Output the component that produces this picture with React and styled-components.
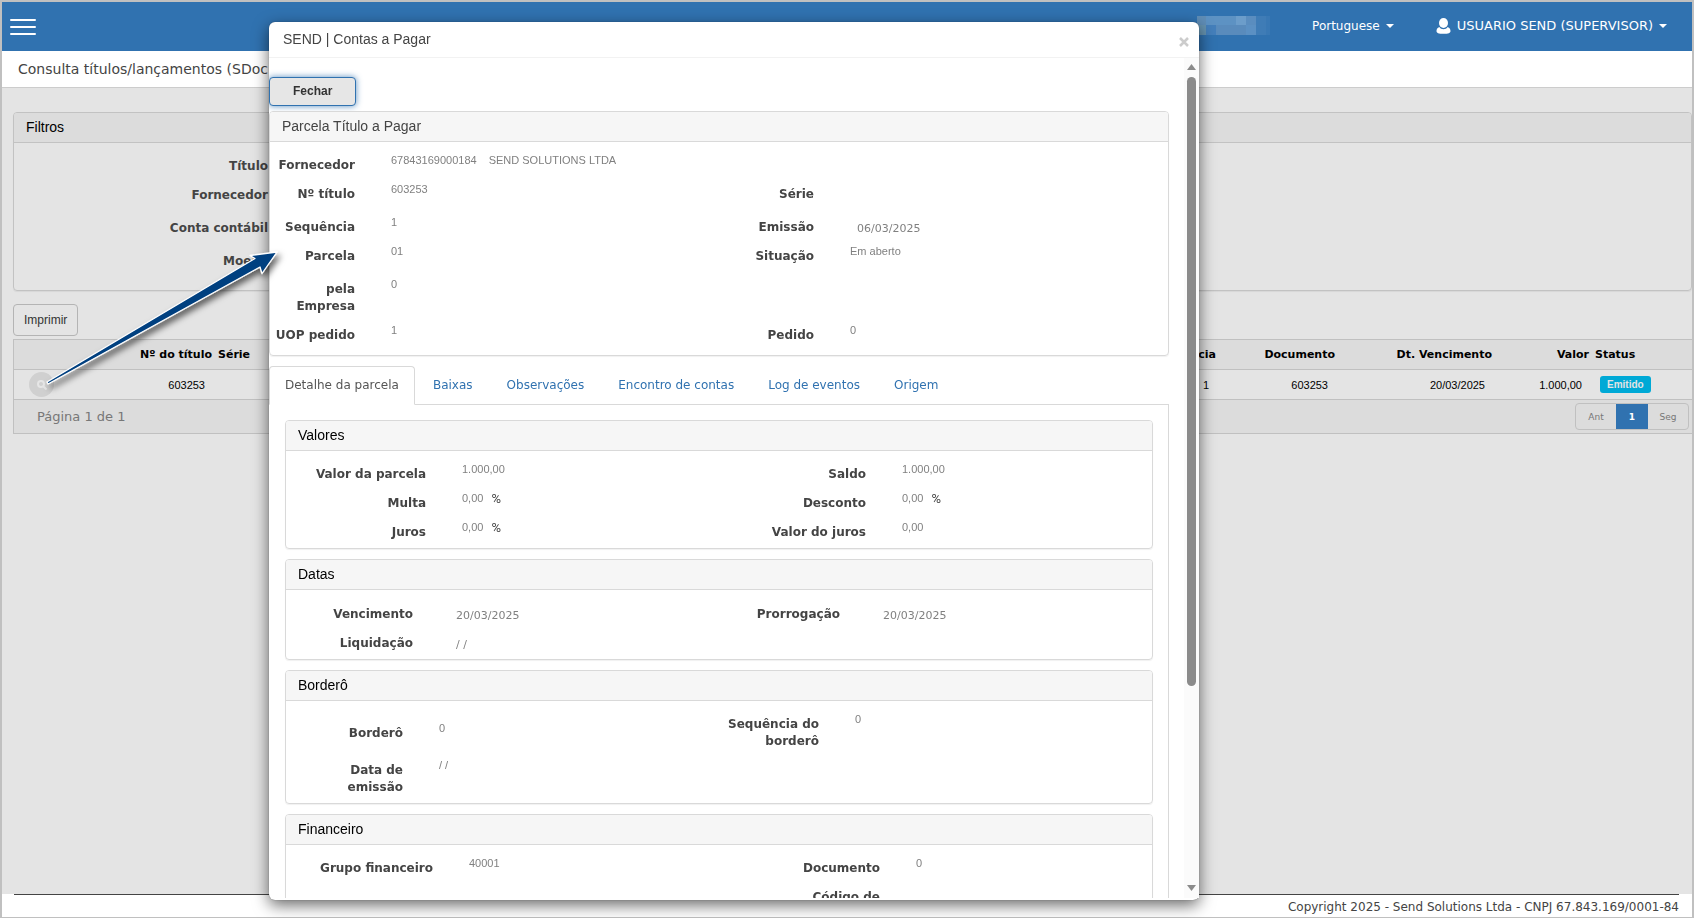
import React from "react";
import styled, { createGlobalStyle } from "styled-components";

const verdana = `Verdana, "DejaVu Sans", sans-serif`;
const arial = `Arial, "Liberation Sans", sans-serif`;

const GlobalStyle = createGlobalStyle`
  * {
    box-sizing: border-box;
  }
  body {
    margin: 0;
    font-family: ${verdana};
    font-size: 12px;
    color: #444;
  }
  h1, h2, h3, p, dl, dd {
    margin: 0;
    font-weight: normal;
  }
`;

/* ---------- page ---------- */

const Page = styled.div`
  height: 100vh;
  display: flex;
  flex-direction: column;
  overflow: hidden;
  border: 2px solid #c0c0c0;
  border-bottom-width: 1px;
  background: #e4e4e4;
`;

const Topbar = styled.header`
  flex: 0 0 49px;
  display: flex;
  align-items: center;
  padding: 0 25px 0 8px;
  background: #3072b0;
`;

const PlainButton = styled.button`
  display: flex;
  align-items: center;
  gap: 6px;
  padding: 0;
  border: 0;
  background: none;
  color: inherit;
  font: inherit;
`;

const UserButton = styled(PlainButton)`
  font-size: 13px;
`;

const UserNav = styled.nav`
  display: flex;
  align-items: center;
  gap: 42px;
  margin-left: auto;
  padding-bottom: 2px;
  color: #fff;
`;

const Caret = styled.span`
  border: 4px solid transparent;
  border-top-color: currentColor;
  border-bottom: 0;
`;

const TitleBar = styled.div`
  flex: 0 0 37px;
  padding: 0 16px;
  border-bottom: 1px solid #ccc;
  background: #fff;
  line-height: 36px;
`;

const PageTitle = styled.h1`
  font-size: 14px;
`;

const Content = styled.main`
  flex: 1;
  min-height: 0;
  padding: 24px 0 0 11px;
`;

const Footer = styled.footer`
  flex: 0 0 23px;
  padding: 0 13px 0 12px;
  background: #fff;
  text-align: right;
  line-height: 20px;

  p {
    padding-top: 2px;
    border-top: 1px solid #444;
  }
`;

/* ---------- panels and fields ---------- */

const PanelBox = styled.section`
  border: 1px solid ${({ $dim }) => ($dim ? "#c2c2c2" : "#d9d9d9")};
  border-radius: 4px;
  box-shadow: 0 1px 1px rgba(0, 0, 0, 0.06);
`;

const PanelTitle = styled.h3`
  padding: 0 12px;
  border-bottom: 1px solid ${({ $dim }) => ($dim ? "#c2c2c2" : "#d9d9d9")};
  border-radius: 3px 3px 0 0;
  background: ${({ $dim }) => ($dim ? "#dcdcdc" : "#f6f6f6")};
  color: ${({ $soft }) => ($soft ? "#444" : "#000")};
  font-family: ${arial};
  font-size: 14px;
  line-height: 29px;
`;

const PanelBody = styled.dl`
  padding: ${({ $pad }) => $pad || "10px 0 0"};
`;

const Row = styled.div`
  display: grid;
  grid-template-columns: 1fr 1fr;
  align-items: center;
  margin-top: ${({ $spaced }) => ($spaced ? "4px" : "0")};
`;

const FieldBox = styled.div`
  display: flex;
  align-items: flex-start;
`;

const Label = styled.dt`
  flex: 0 0 ${({ $width }) => $width}px;
  padding: 5px 0 7px;
  font-weight: bold;
  line-height: 17px;
  text-align: right;
  white-space: pre;
`;

const Value = styled.dd`
  display: flex;
  gap: ${({ $wide }) => ($wide ? "12px" : "8px")};
  padding: ${({ $date }) => ($date ? "6px 0 0 43px" : "0 0 0 36px")};
  color: #808080;
  font-family: ${({ $date }) => ($date ? verdana : arial)};
  font-size: 11px;
  line-height: 17px;
`;

const Unit = styled.span`
  color: #444;
  font-family: Roboto, sans-serif;
  font-size: 13px;
`;

/* ---------- results table ---------- */

const PrintButton = styled.button`
  display: block;
  height: 32px;
  margin: 13px 0 3px;
  padding: 0 10px;
  border: 1px solid #b4b4b4;
  border-radius: 4px;
  background: transparent;
  color: #333;
  font-family: ${arial};
  font-size: 12px;
`;

const Table = styled.table`
  width: 100%;
  table-layout: fixed;
  border-collapse: separate;
  border-spacing: 0;
  border: solid #c0c0c0;
  border-width: 1px 0 0 1px;
  color: #000;
  font-size: 11px;

  th {
    height: 30px;
    padding: 0 0 0 6px;
    border-bottom: 1px solid #c0c0c0;
    background: #dcdcdc;
    text-align: right;
    white-space: nowrap;
  }
  td {
    height: 29px;
    padding: 0 7px 0 6px;
    font-family: ${arial};
    text-align: right;
  }
  th.left,
  td.left {
    text-align: left;
  }
`;

const RoundButton = styled.button`
  display: flex;
  align-items: center;
  justify-content: center;
  width: 25px;
  height: 25px;
  margin-left: 9px;
  padding: 0;
  border: 0;
  border-radius: 50%;
  background: #d0d0d0;
`;

const Badge = styled.span`
  display: inline-block;
  margin-left: 5px;
  padding: 0 7px;
  border-radius: 3px;
  background: #00a9d6;
  color: #e4e4e4;
  font-size: 10px;
  font-weight: bold;
  line-height: 17px;
`;

const TableFooter = styled.div`
  display: flex;
  align-items: center;
  justify-content: space-between;
  height: 35px;
  padding: 0 3px 0 23px;
  border: 1px solid #c0c0c0;
  border-right: 0;
  background: #dcdcdc;
  color: #777;
  font-size: 13px;
`;

const Pager = styled.nav`
  display: flex;
  border: 1px solid #c0c0c0;
  border-radius: 4px;
`;

const PageButton = styled.button`
  width: ${({ $active }) => ($active ? "32px" : "40px")};
  height: 25px;
  padding: 0;
  border: 0;
  background: ${({ $active }) => ($active ? "#3072b0" : "transparent")};
  color: ${({ $active }) => ($active ? "#fff" : "#777")};
  font-family: ${verdana};
  font-size: 9px;
  font-weight: ${({ $active }) => ($active ? "bold" : "normal")};
`;

/* ---------- modal ---------- */

const Overlay = styled.div`
  position: fixed;
  inset: 0;
  display: flex;
  padding: 22px 24px 18px 269px;
`;

const Dialog = styled.div`
  flex: 1;
  max-width: 930px;
  display: flex;
  flex-direction: column;
  padding-bottom: 2px;
  border-radius: 6px;
  background: #fff;
  box-shadow: 0 0 1px rgba(0, 0, 0, 0.5), 0 5px 16px rgba(0, 0, 0, 0.6);
`;

const DialogHeader = styled.div`
  flex: 0 0 36px;
  display: flex;
  align-items: center;
  justify-content: space-between;
  padding: 0 10px 0 14px;
  border-bottom: 1px solid #f2f2f2;
`;

const DialogTitle = styled.h2`
  padding-bottom: 2px;
  font-family: ${arial};
  font-size: 14px;
`;

const CloseButton = styled(PlainButton)`
  padding-top: 5px;
`;

const DialogMain = styled.div`
  flex: 1;
  min-height: 0;
  display: flex;
`;

const Scroller = styled.div`
  flex: 1;
  overflow-y: auto;
  padding: 19px 15px 0 0;
  scrollbar-width: none;
`;

const ScrollRail = styled.div`
  flex: 0 0 15px;
  display: flex;
  flex-direction: column;
  align-items: center;
  padding: 6px 0 7px;
  background: #fbfbfb;
`;

const ScrollTrack = styled.div`
  flex: 1;
  width: 9px;
  padding: 7px 0;

  &::before {
    content: "";
    display: block;
    height: 76%;
    border-radius: 5px;
    background: #8b8b8b;
  }
`;

const FecharButton = styled.button`
  display: block;
  height: 29px;
  margin-bottom: 5px;
  padding: 0 23px 2px;
  border: 1px solid #3072b0;
  border-radius: 4px;
  background: #e6e6e6;
  box-shadow: 0 0 6px rgba(48, 114, 176, 0.8);
  color: #333;
  font-family: ${arial};
  font-size: 12px;
  font-weight: bold;
`;

const Tabs = styled.nav`
  display: flex;
  gap: 2px;
  margin-top: 10px;
  border-bottom: 1px solid #d9d9d9;
`;

const Tab = styled.a`
  margin-bottom: -1px;
  padding: 0 15px;
  border: 1px solid ${({ $active }) => ($active ? "#d9d9d9" : "transparent")};
  border-bottom-color: ${({ $active }) => ($active ? "#fff" : "transparent")};
  border-radius: 4px 4px 0 0;
  color: ${({ $active }) => ($active ? "#555" : "#3072b0")};
  line-height: 37px;
  text-decoration: none;
`;

const TabPanel = styled.div`
  display: flex;
  flex-direction: column;
  gap: 10px;
  padding: 15px 15px 20px 16px;
  border-right: 1px solid #d9d9d9;
`;

/* pointer from the search button to the dialog */
const Pointer = styled.svg`
  position: fixed;
  left: 40px;
  top: 240px;
  pointer-events: none;
`;

const Field = ({ label, width, value, extra, date, unit }) => (
  <FieldBox>
    <Label $width={width}>{label}</Label>
    <Value $date={date} $wide={!!extra}>
      {value}
      {extra && <span>{extra}</span>}
      {unit && <Unit>{unit}</Unit>}
    </Value>
  </FieldBox>
);

const Panel = ({ title, pad, soft, dim, left, right, rows }) => (
  <PanelBox $dim={dim}>
    <PanelTitle $soft={soft} $dim={dim}>{title}</PanelTitle>
    <PanelBody $pad={pad}>
      {rows.map(([a, b, spaced]) => (
        <Row key={a.label} $spaced={spaced}>
          <Field width={left} {...a} />
          {b && <Field width={right} {...b} />}
        </Row>
      ))}
    </PanelBody>
  </PanelBox>
);

const filtros = [
  [{ label: "Título" }],
  [{ label: "Fornecedor" }],
  [{ label: "Conta contábil" }, null, true],
  [{ label: "Moeda" }, null, true],
];

const parcela = [
  [{ label: "Fornecedor", value: "67843169000184", extra: "SEND SOLUTIONS LTDA" }],
  [{ label: "Nº título", value: "603253" }, { label: "Série" }],
  [{ label: "Sequência", value: "1" }, { label: "Emissão", value: "06/03/2025", date: true }, true],
  [{ label: "Parcela", value: "01" }, { label: "Situação", value: "Em aberto" }],
  [{ label: "pela\nEmpresa", value: "0" }, null, true],
  [{ label: "UOP pedido", value: "1" }, { label: "Pedido", value: "0" }],
];

const valores = [
  [{ label: "Valor da parcela", value: "1.000,00" }, { label: "Saldo", value: "1.000,00" }],
  [{ label: "Multa", value: "0,00", unit: "%" }, { label: "Desconto", value: "0,00", unit: "%" }],
  [{ label: "Juros", value: "0,00", unit: "%" }, { label: "Valor do juros", value: "0,00" }],
];

const datas = [
  [
    { label: "Vencimento", value: "20/03/2025", date: true },
    { label: "Prorrogação", value: "20/03/2025", date: true },
  ],
  [{ label: "Liquidação", value: "/ /", date: true }],
];

const bordero = [
  [{ label: "Borderô", value: "0" }, { label: "Sequência do\nborderô", value: "0" }],
  [{ label: "Data de\nemissão", value: "/ /" }],
];

const financeiro = [
  [{ label: "Grupo financeiro", value: "40001" }, { label: "Documento", value: "0" }],
  [{ label: "Câmbio", value: "" }, { label: "Código de\nbarras", value: "" }],
];

const tabs = [
  "Detalhe da parcela",
  "Baixas",
  "Observações",
  "Encontro de contas",
  "Log de eventos",
  "Origem",
];

const MenuIcon = () => (
  <svg width="26" height="18" viewBox="0 0 26 18" stroke="#fff" strokeWidth="2" strokeLinecap="round">
    <path d="M1 2h24M1 9h24M1 16h24" />
  </svg>
);

const UserIcon = () => (
  <svg width="15" height="16" viewBox="0 0 15 16" fill="#fff">
    <ellipse cx="7.500" cy="5" rx="4.500" ry="5" />
    <path d="M3.300 9C1.500 9.800.5 11.200.5 13c0 2 2 2.800 7 2.800s7-.8 7-2.800c0-1.800-1-3.200-2.800-4-1 1.500-2.500 2.200-4.200 2.200S4.300 10.500 3.300 9z" />
  </svg>
);

/* masked company name */
const MaskedName = () => (
  <svg width="73" height="19" viewBox="0 0 73 19" shapeRendering="crispEdges">
    <path fill="#5f8db6" d="M0 0h9v9H0z" />
    <path fill="#5d92c3" d="M9 0h30v9H9z" />
    <path fill="#6c9dca" d="M39 0h10v9H39z" />
    <path fill="#5a8dbf" d="M49 0h10v9H49z" />
    <path fill="#3f7cb6" d="M59 0h10v19H59z" />
    <path fill="#3978b4" d="M69 0h4v19h-4z" />
    <path fill="#6592af" d="M0 9h9v10H0z" />
    <path fill="#447fbb" d="M9 9h10v10H9z" />
    <path fill="#598bbc" d="M19 9h30v10H19z" />
    <path fill="#5b90c3" d="M49 9h10v10H49z" />
  </svg>
);

const SearchIcon = () => (
  <svg width="10" height="10" viewBox="0 0 10 10" fill="none" stroke="#e6e6e6" strokeWidth="2">
    <circle cx="4" cy="4" r="3" />
    <path d="M6.500 6.500L9.500 9.500" />
  </svg>
);

const ArrowPointer = () => (
  <Pointer width="250" height="160" viewBox="40 240 250 160" aria-hidden="true">
    <defs>
      <filter id="pointerShadow" x="-10%" y="-10%" width="130%" height="130%">
        <feDropShadow dx="3" dy="4" stdDeviation="3" floodOpacity="0.6" />
      </filter>
    </defs>
    <path
      d="M47 382L255 258.500L250 255.500L277 252L262 273.500L260 267L48 384Z"
      fill="#004080"
      stroke="#fff"
      strokeWidth="1.300"
      strokeLinejoin="round"
      filter="url(#pointerShadow)"
    />
  </Pointer>
);

const ContasAPagar = () => (
  <Overlay>
    <Dialog role="dialog" aria-labelledby="dialog-title">
      <DialogHeader>
        <DialogTitle id="dialog-title">SEND | Contas a Pagar</DialogTitle>
        <CloseButton type="button" aria-label="Fechar janela">
          <svg width="10" height="10" viewBox="0 0 10 10" stroke="#ccc" strokeWidth="2.500">
            <path d="M1 1l8 8M9 1l-8 8" />
          </svg>
        </CloseButton>
      </DialogHeader>
      <DialogMain>
        <Scroller>
          <FecharButton type="button">Fechar</FecharButton>
          <Panel title="Parcela Título a Pagar" soft left={85} right={95} pad="10px 0 4px" rows={parcela} />
          <Tabs>
            {tabs.map((name, i) => (
              <Tab key={name} href="#" $active={i === 0}>{name}</Tab>
            ))}
          </Tabs>
          <TabPanel>
            <Panel title="Valores" left={140} right={147} rows={valores} />
            <Panel title="Datas" left={127} right={121} pad="11px 0 0" rows={datas} />
            <Panel title="Borderô" left={117} right={100} rows={bordero} />
            <Panel title="Financeiro" left={147} right={161} rows={financeiro} />
          </TabPanel>
        </Scroller>
        <ScrollRail>
          <svg width="9" height="6" viewBox="0 0 9 6" fill="#8b8b8b">
            <path d="M4.500 0L9 6H0z" />
          </svg>
          <ScrollTrack />
          <svg width="9" height="6" viewBox="0 0 9 6" fill="#8b8b8b">
            <path d="M0 0h9L4.500 6z" />
          </svg>
        </ScrollRail>
      </DialogMain>
    </Dialog>
  </Overlay>
);

const App = () => (
  <>
    <GlobalStyle />
    <Page>
      <Topbar>
        <PlainButton type="button" aria-label="Menu">
          <MenuIcon />
        </PlainButton>
        <UserNav>
          <MaskedName />
          <PlainButton type="button">
            Portuguese
            <Caret />
          </PlainButton>
          <UserButton type="button">
            <UserIcon />
            USUARIO SEND (SUPERVISOR)
            <Caret />
          </UserButton>
        </UserNav>
      </Topbar>
      <TitleBar>
        <PageTitle>Consulta títulos/lançamentos (SDoc</PageTitle>
      </TitleBar>
      <Content>
        <Panel title="Filtros" dim left={254} pad="10px 0 13px" rows={filtros} />
        <PrintButton type="button">Imprimir</PrintButton>
        <Table>
          <colgroup>
            <col style={{ width: 39 }} />
            <col style={{ width: 38 }} />
            <col style={{ width: 121 }} />
            <col style={{ width: 100 }} />
            <col />
            <col style={{ width: 119 }} />
            <col style={{ width: 157 }} />
            <col style={{ width: 97 }} />
            <col style={{ width: 103 }} />
          </colgroup>
          <thead>
            <tr>
              <th colSpan="2" />
              <th>Nº do título</th>
              <th className="left">Série</th>
              <th>Sequência</th>
              <th>Documento</th>
              <th>Dt. Vencimento</th>
              <th>Valor</th>
              <th className="left">Status</th>
            </tr>
          </thead>
          <tbody>
            <tr>
              <td className="left" colSpan="2">
                <RoundButton type="button" aria-label="Consultar título">
                  <SearchIcon />
                </RoundButton>
              </td>
              <td>603253</td>
              <td />
              <td>1</td>
              <td>603253</td>
              <td>20/03/2025</td>
              <td>1.000,00</td>
              <td className="left">
                <Badge>Emitido</Badge>
              </td>
            </tr>
          </tbody>
        </Table>
        <TableFooter>
          <span>Página 1 de 1</span>
          <Pager>
            <PageButton type="button">Ant</PageButton>
            <PageButton type="button" $active>1</PageButton>
            <PageButton type="button">Seg</PageButton>
          </Pager>
        </TableFooter>
      </Content>
      <Footer>
        <p>Copyright 2025 - Send Solutions Ltda - CNPJ 67.843.169/0001-84</p>
      </Footer>
    </Page>
    <ContasAPagar />
    <ArrowPointer />
  </>
);

export default App;
